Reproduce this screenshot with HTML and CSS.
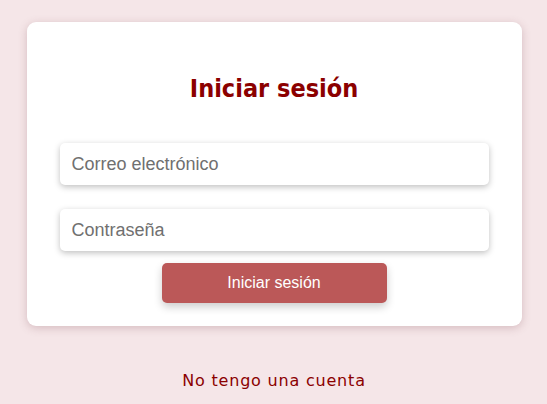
FILE: index.html
```html
<!DOCTYPE html>
<html lang="es">
<head>
<meta charset="utf-8">
<link rel="stylesheet" href="styles.css">
</head>
<body>
<main class="page">
  <form class="card">
    <h1 class="title">Iniciar sesión</h1>
    <input class="field" type="email" placeholder="Correo electrónico">
    <input class="field" type="password" placeholder="Contraseña">
    <button class="submit" type="button">Iniciar sesión</button>
  </form>
  <a class="link" href="#">No tengo una cuenta</a>
</main>
</body>
</html>
```
FILE: styles.css
```css
html, body {
  margin: 0;
  padding: 0;
  background: #f5e6e8;
}
.page {
  display: flex;
  flex-direction: column;
  align-items: center;
  padding: 22px 0 0 1px;
}
.card {
  box-sizing: border-box;
  width: 495px;
  background: #fff;
  border-radius: 9px;
  box-shadow: 0 2px 8px rgba(120, 60, 70, 0.25);
  padding: 51px 33px 23px;
  display: flex;
  flex-direction: column;
  align-items: center;
}
.title {
  margin: 0 0 38px;
  font-family: "DejaVu Sans Condensed", "DejaVu Sans", sans-serif;
  font-weight: bold;
  font-size: 25px;
  line-height: 32px;
  color: #8b0000;
}
.field {
  box-sizing: border-box;
  width: 100%;
  height: 42px;
  border: none;
  border-radius: 5px;
  background: #fff;
  box-shadow: 0 2px 6px rgba(0, 0, 0, 0.25);
  padding: 0 12px;
  font-family: "Liberation Sans", Arial, sans-serif;
  font-size: 18px;
  margin-bottom: 24px;
  outline: none;
}
.field:nth-of-type(2) {
  margin-bottom: 12px;
}
.field::placeholder {
  color: #707070;
}
.submit {
  width: 225px;
  height: 40px;
  border: none;
  border-radius: 5px;
  background: #bb5858;
  color: #fff;
  font-family: "Liberation Sans", Arial, sans-serif;
  font-size: 16px;
  box-shadow: 0 4px 8px rgba(0, 0, 0, 0.2);
}
.link {
  margin-top: 45px;
  font-family: "DejaVu Sans", sans-serif;
  font-size: 16px;
  letter-spacing: 0.8px;
  color: #8b0000;
  text-decoration: none;
}
```
